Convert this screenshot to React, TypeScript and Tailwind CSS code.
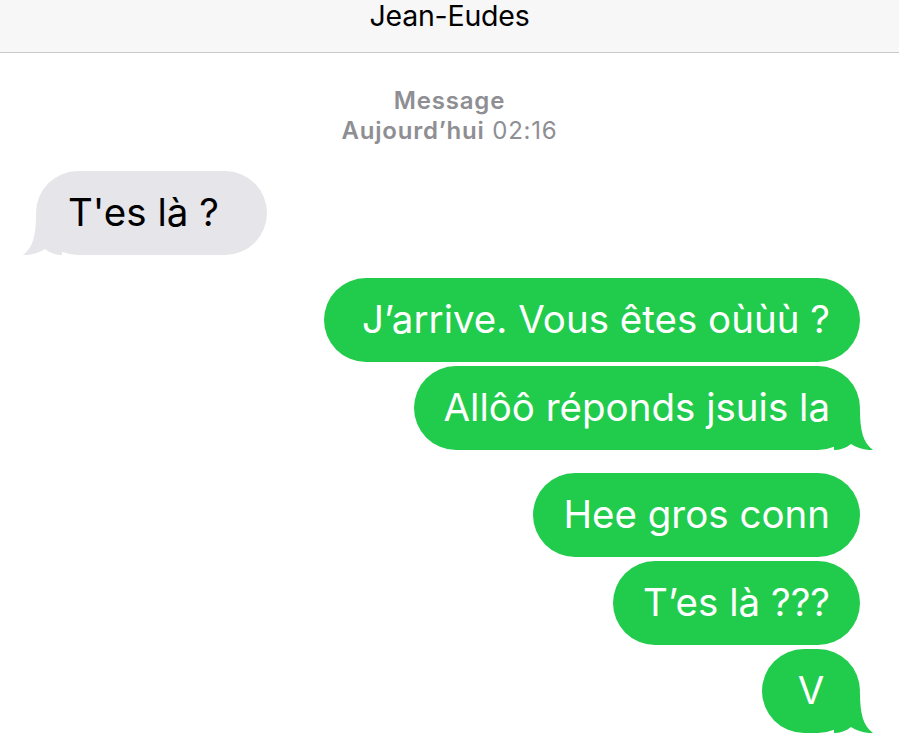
import React from "react";

const GREEN = "#21cc4c";

function Tail({ side, fill }: { side: "left" | "right"; fill: string }) {
  return (
    <svg
      viewBox="0 0 40 40"
      className={
        side === "right"
          ? "absolute -right-[14px] bottom-0 h-[40px] w-[40px]"
          : "absolute -left-[14px] bottom-0 h-[40px] w-[40px] -scale-x-100"
      }
    >
      <path
        d="M0 0 H26 C26 20 29 33 39 40 C31 40.5 23 38 17 34 C12 38 6 40 0 40 Z"
        fill={fill}
      />
    </svg>
  );
}

function Bubble({
  text,
  mine,
  tail,
  className = "",
}: {
  text: string;
  mine?: boolean;
  tail?: boolean;
  className?: string;
}) {
  return (
    <div
      className={
        "relative flex h-[84px] min-w-[98px] items-center justify-center rounded-[42px] text-[38.5px] " +
        (mine ? "bg-[#21cc4c] px-[30px] text-white " : "bg-[#e5e5ea] pl-[32px] pr-[48px] text-black ") +
        className
      }
    >
      {tail && <Tail side={mine ? "right" : "left"} fill={mine ? GREEN : "#e5e5ea"} />}
      <span className="relative whitespace-nowrap">{text}</span>
    </div>
  );
}

export default function App() {
  return (
    <div className="h-[753px] w-[899px] overflow-hidden bg-white font-['Inter',sans-serif]">
      <header className="flex h-[53px] justify-center border-b border-[#c8c8cc] bg-[#f7f7f7] pt-[1px]">
        <span className="text-[28.5px] leading-[30px] tracking-[-0.2px] text-black">Jean-Eudes</span>
      </header>

      <div className="mt-[33px] flex flex-col items-center text-[24px] leading-[30px] tracking-[0.8px] text-[#8e8e93]">
        <div className="font-semibold">Message</div>
        <div>
          <span className="font-semibold">Aujourd’hui</span> 02:16
        </div>
      </div>

      <div className="mt-[25px] flex flex-col px-[36px] pr-[39px]">
        <div className="flex">
          <Bubble text="T'es là ?" tail />
        </div>

        <div className="mt-[23px] flex flex-col items-end gap-[4px]">
          <Bubble text="J’arrive. Vous êtes oùùù ?" mine className="pl-[38px]" />
          <Bubble text="Allôô réponds jsuis la" mine tail />
        </div>

        <div className="mt-[23px] flex flex-col items-end gap-[4px]">
          <Bubble text="Hee gros conn" mine />
          <Bubble text="T’es là ???" mine />
          <Bubble text="V" mine tail />
        </div>
      </div>
    </div>
  );
}
